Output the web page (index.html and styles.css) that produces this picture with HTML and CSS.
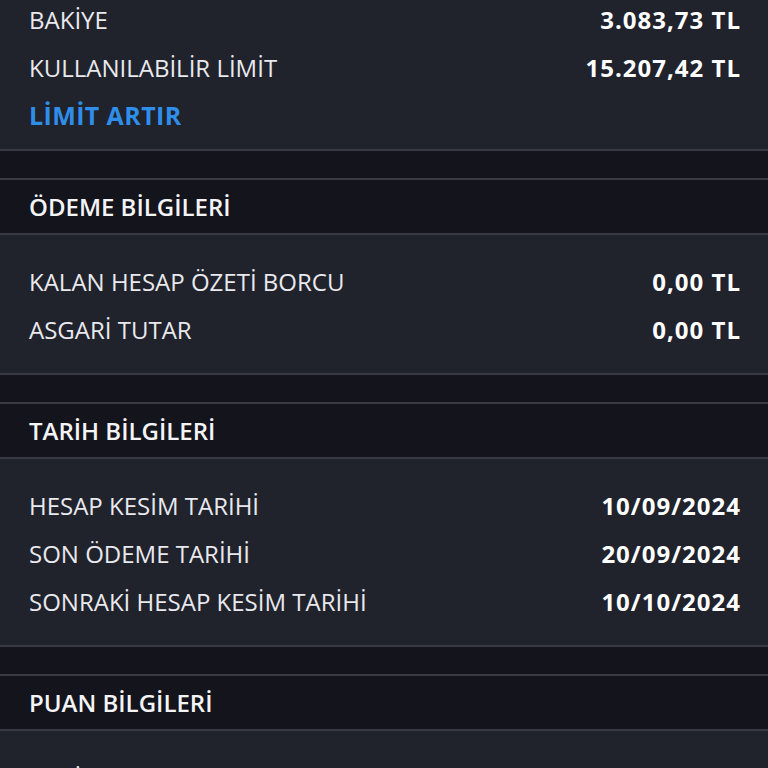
FILE: index.html
```html
<!DOCTYPE html>
<html lang="tr">
<head>
<meta charset="utf-8">
<link rel="stylesheet" href="styles.css">
</head>
<body>
<div class="page">
  <section class="card card-top">
    <div class="row"><span class="label">BAKİYE</span><span class="value">3.083,73 TL</span></div>
    <div class="row"><span class="label">KULLANILABİLİR LİMİT</span><span class="value">15.207,42 TL</span></div>
    <div class="row"><span class="link">LİMİT ARTIR</span></div>
  </section>
  <div class="gap"></div>
  <div class="head">ÖDEME BİLGİLERİ</div>
  <section class="card">
    <div class="row"><span class="label">KALAN HESAP ÖZETİ BORCU</span><span class="value">0,00 TL</span></div>
    <div class="row"><span class="label">ASGARİ TUTAR</span><span class="value">0,00 TL</span></div>
  </section>
  <div class="gap"></div>
  <div class="head">TARİH BİLGİLERİ</div>
  <section class="card">
    <div class="row"><span class="label">HESAP KESİM TARİHİ</span><span class="value">10/09/2024</span></div>
    <div class="row"><span class="label">SON ÖDEME TARİHİ</span><span class="value">20/09/2024</span></div>
    <div class="row"><span class="label">SONRAKİ HESAP KESİM TARİHİ</span><span class="value">10/10/2024</span></div>
  </section>
  <div class="gap"></div>
  <div class="head">PUAN BİLGİLERİ</div>
  <section class="card card-last">
    <div class="row"><span class="label">BAKİYE</span><span class="value">0,00 TL</span></div>
    <div class="row"><span class="label">KAZANILAN PUAN</span><span class="value">0,00 TL</span></div>
  </section>
</div>
</body>
</html>
```
FILE: styles.css
```css
html, body {
  margin: 0;
  padding: 0;
  background: #14141c;
}
body {
  font-family: "Open Sans", "Noto Sans", sans-serif;
  color: #ececf0;
  overflow: hidden;
}
.page {
  display: flex;
  flex-direction: column;
}
.card {
  background: #20222c;
  border-bottom: 2px solid #393a46;
  padding: 22px 28px 20px 29px;
  display: flex;
  flex-direction: column;
}
.card-top {
  margin-top: -27px;
  padding-bottom: 10px;
}
.card-last {
  padding-top: 23px;
}
.row {
  height: 48px;
  display: flex;
  align-items: center;
  justify-content: space-between;
}
.label {
  font-size: 24px;
  font-weight: 400;
  color: #e9e9ee;
}
.value {
  font-size: 24px;
  font-weight: 700;
  letter-spacing: 1px;
  margin-right: -1px;
  color: #ffffff;
}
.link {
  font-size: 25px;
  font-weight: 700;
  letter-spacing: 0.4px;
  color: #2f8eea;
}
.gap {
  height: 27px;
  background: #14141c;
}
.head {
  height: 53px;
  background: #14141c;
  border-bottom: 2px solid #393a46;
  border-top: 2px solid #393a46;
  display: flex;
  align-items: center;
  padding-left: 29px;
  font-size: 24px;
  font-weight: 600;
  color: #f4f4f6;
}
```
